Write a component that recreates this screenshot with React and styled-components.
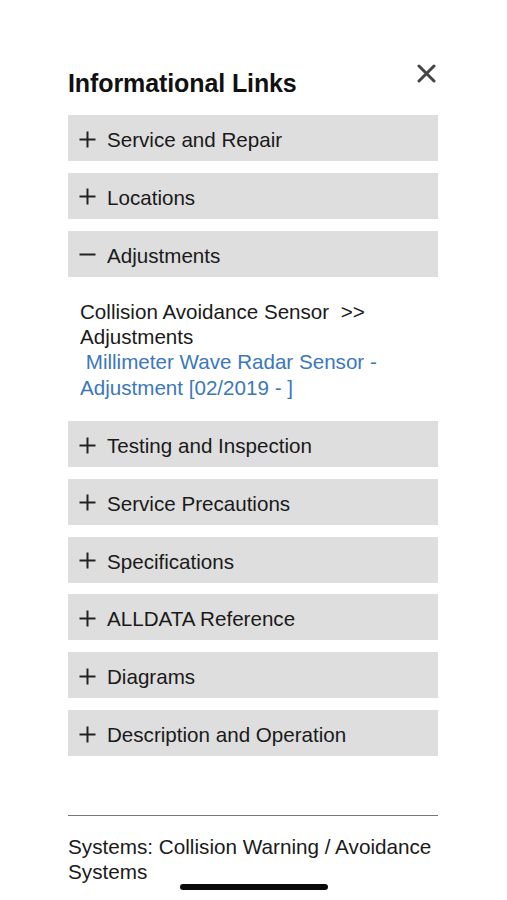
import React, { useState } from 'react'
import styled, { createGlobalStyle } from 'styled-components'

const GlobalStyle = createGlobalStyle`
  html, body { margin: 0; padding: 0; background: #fff; }
  body { font-family: "Liberation Sans", Arial, sans-serif; color: #1c1c1c; }
`

const sections = [
  'Service and Repair',
  'Locations',
  'Adjustments',
  'Testing and Inspection',
  'Service Precautions',
  'Specifications',
  'ALLDATA Reference',
  'Diagrams',
  'Description and Operation',
]

const App = () => {
  const [open, setOpen] = useState('Adjustments')

  return (
    <>
      <GlobalStyle />
      <Page>
        <Header>
          <Title>Informational Links</Title>
          <Close aria-label="close">
            <svg width="19" height="19" viewBox="0 0 19 19">
              <path d="M2 2 L17 17 M17 2 L2 17" stroke="#444" strokeWidth="3" strokeLinecap="round" />
            </svg>
          </Close>
        </Header>
        <List>
          {sections.map((name) => (
            <Section key={name}>
              <Bar onClick={() => setOpen(open === name ? null : name)}>
                <Sign>
                  <svg width="17" height="17" viewBox="0 0 17 17">
                    <path d="M0.5 8.5 H16.5" stroke="#222" strokeWidth="2" />
                    {open !== name && <path d="M8.5 0.5 V16.5" stroke="#222" strokeWidth="2" />}
                  </svg>
                </Sign>
                <Label>{name}</Label>
              </Bar>
              {open === name && (
                <Body>
                  <div>Collision Avoidance Sensor&nbsp; &gt;&gt;</div>
                  <div>Adjustments</div>
                  <Link href="#">&nbsp;Millimeter Wave Radar Sensor - Adjustment [02/2019 - ]</Link>
                </Body>
              )}
            </Section>
          ))}
        </List>
        <Footer>Systems: Collision Warning / Avoidance Systems</Footer>
        <HomeBar />
      </Page>
    </>
  )
}

export default App

const Page = styled.div`
  width: 507px;
  height: 900px;
  box-sizing: border-box;
  padding: 58px 69px 0 68px;
  display: flex;
  flex-direction: column;
  position: relative;
`

const Header = styled.div`
  display: flex;
  justify-content: space-between;
  align-items: flex-start;
  height: 57px;
`

const Title = styled.h1`
  margin: 11px 0 0;
  font-size: 25px;
  font-weight: 700;
  color: #111;
  letter-spacing: -0.1px;
`

const Close = styled.div`
  margin: 6px 2px 0 0;
  display: flex;
`

const List = styled.div`
  display: flex;
  flex-direction: column;
  gap: 11.8px;
`

const Section = styled.div`
  display: flex;
  flex-direction: column;
`

const Bar = styled.div`
  height: 46px;
  box-sizing: border-box;
  padding: 4px 0 0 11px;
  background: #dedede;
  display: flex;
  align-items: center;
  cursor: pointer;
`

const Label = styled.span`
  font-size: 20.6px;
  color: #1a1a1a;
`

const Sign = styled.span`
  display: flex;
  margin: -2px 11px 0 0;
`

const Body = styled.div`
  padding: 22px 12px 9px;
  font-size: 20.6px;
  line-height: 25.4px;
  color: #1a1a1a;
`

const Link = styled.a`
  color: #3b78bb;
  text-decoration: none;
  display: block;
`

const Footer = styled.div`
  margin-top: 59px;
  border-top: 1px solid #777;
  padding-top: 18px;
  font-size: 20.7px;
  line-height: 25px;
  color: #1a1a1a;
`

const HomeBar = styled.div`
  position: absolute;
  left: 180px;
  top: 884px;
  width: 148px;
  height: 6px;
  border-radius: 3px;
  background: #0a0a0a;
`
